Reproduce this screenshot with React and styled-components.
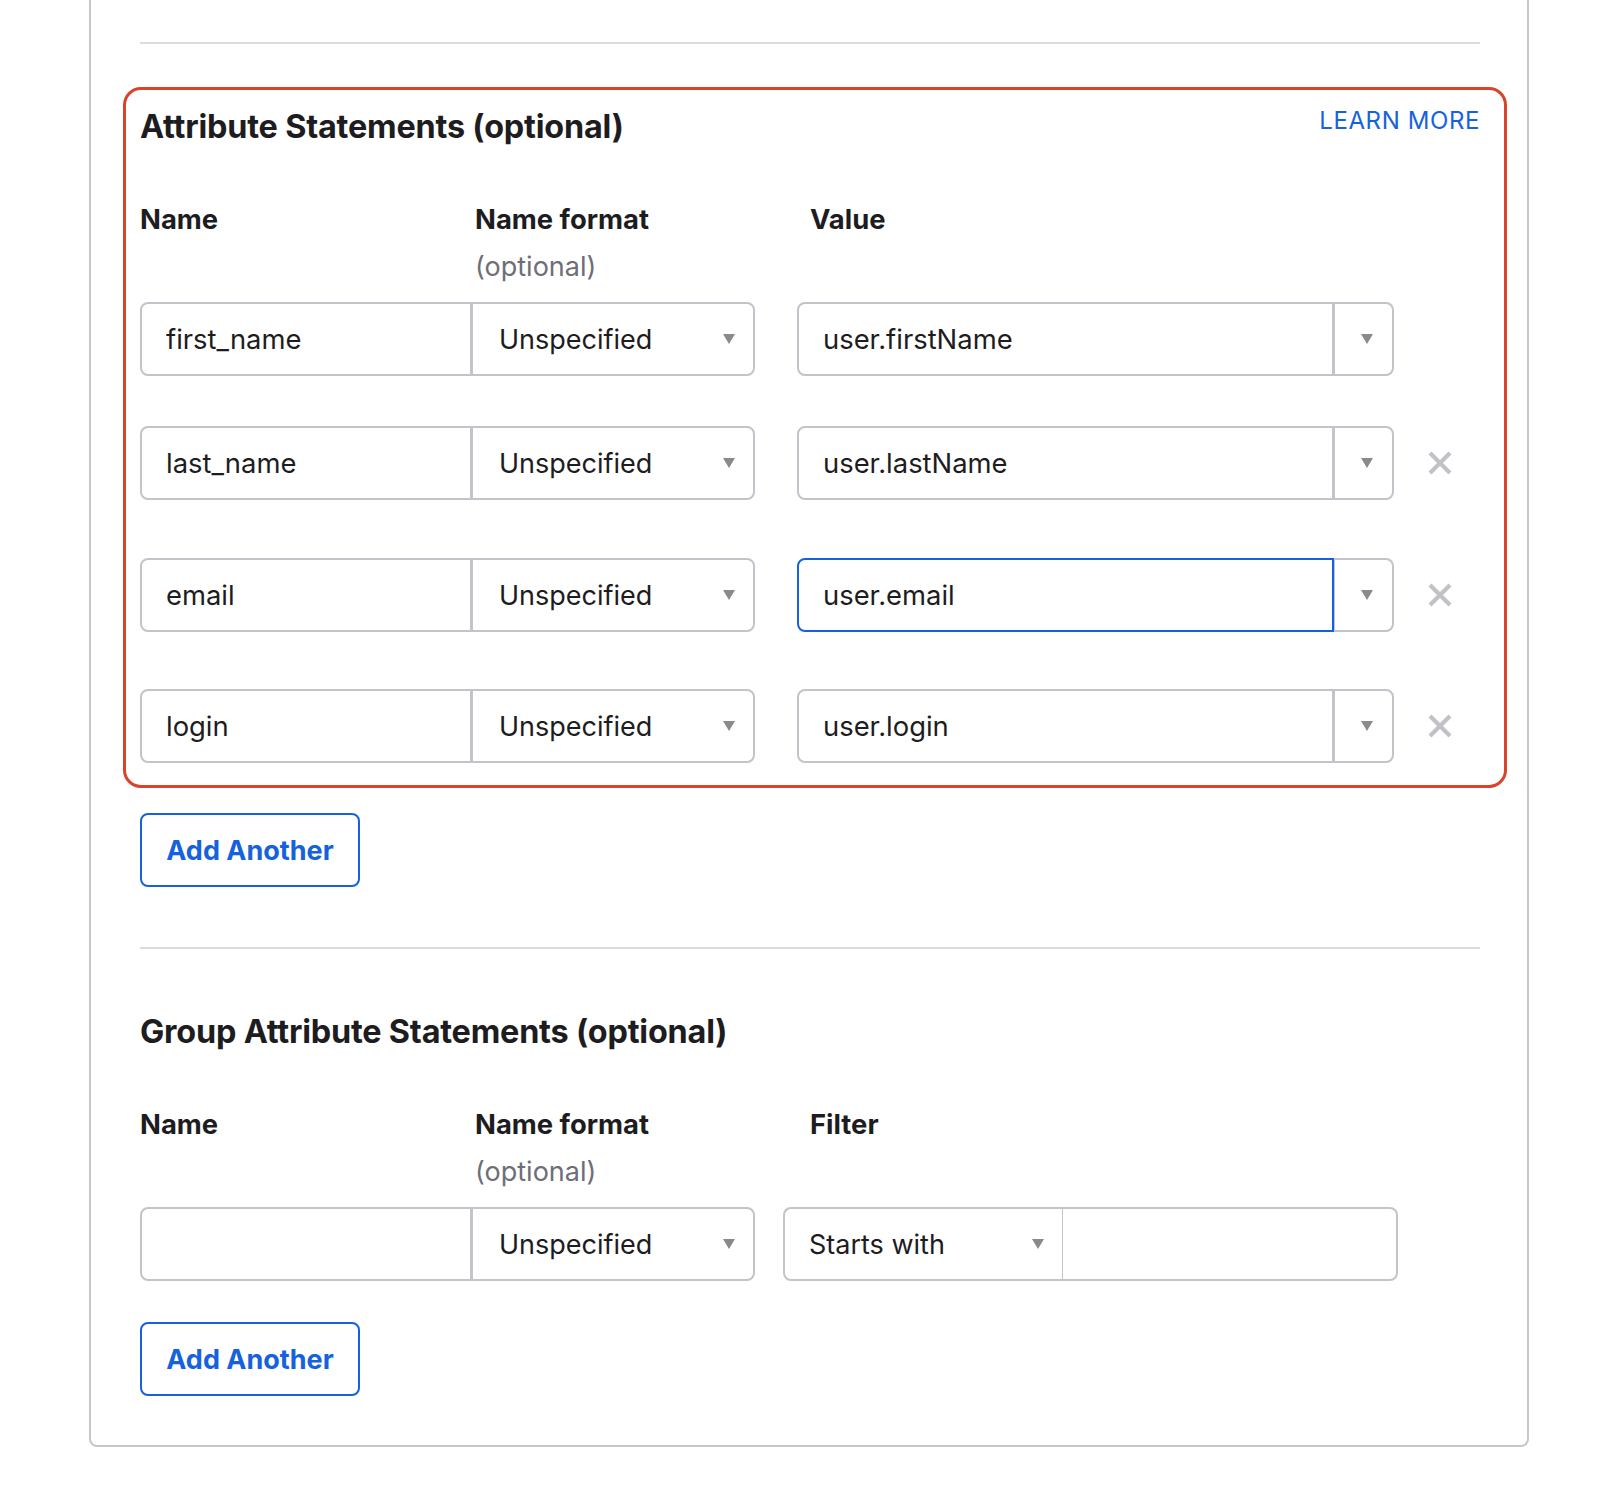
import React from "react";
import styled, { createGlobalStyle } from "styled-components";

const GlobalStyle = createGlobalStyle`
  html, body {
    margin: 0;
    padding: 0;
    background: #ffffff;
  }
  body {
    font-family: Inter, "Noto Sans", "Liberation Sans", sans-serif;
    color: #1d1d21;
  }
`;

const Panel = styled.div`
  box-sizing: border-box;
  width: 1440px;
  margin-left: 89px;
  padding: 42px 47px 49px 49px;
  border: 2px solid #c6c6cd;
  border-top: none;
  border-radius: 0 0 8px 8px;
  min-height: 1447px;
`;

const Divider = styled.hr`
  margin: ${(p) => p.$top || 0}px 0 0;
  border: none;
  height: 2px;
  background: #dcdce0;
`;

const Highlight = styled.section`
  margin: 43px -27px 0 -17px;
  padding: 17px 24px 22px 14px;
  border: 3px solid #d7432b;
  border-radius: 18px;
`;

const SectionHead = styled.div`
  display: flex;
  justify-content: space-between;
  align-items: flex-start;
  margin-top: ${(p) => p.$top || 0}px;
`;

const Title = styled.h2`
  margin: 0;
  font-size: 32.4px;
  line-height: 40px;
  font-weight: 700;
  letter-spacing: -0.2px;
`;

const LearnMore = styled.a`
  margin-top: -2px;
  font-size: 24px;
  line-height: 32px;
  letter-spacing: 0.6px;
  color: #1662dd;
  text-decoration: none;
  cursor: pointer;
`;

const ColumnHeads = styled.div`
  display: grid;
  grid-template-columns: 335px 335px 1fr;
  margin-top: ${(p) => p.$top}px;
  height: 88px;
`;

const Label = styled.div`
  font-size: 27.4px;
  line-height: 44px;
  font-weight: 700;
`;

const Hint = styled.div`
  padding-top: 4px;
  font-size: 27px;
  line-height: 44px;
  font-weight: 400;
  color: #6e6e78;
`;

const Row = styled.div`
  display: flex;
  align-items: center;
  margin-top: ${(p) => p.$top}px;
  height: 74px;
`;

const Group = styled.div`
  display: flex;
  height: 74px;
  width: ${(p) => p.$width}px;
  margin-left: ${(p) => p.$gap || 0}px;
`;

const TextField = styled.input`
  box-sizing: border-box;
  height: 74px;
  width: ${(p) => (p.$width ? `${p.$width}px` : "auto")};
  flex: ${(p) => (p.$width ? "none" : "1")};
  min-width: 0;
  margin: 0;
  padding: 0 0 0 ${(p) => p.$pad || 24}px;
  font-family: inherit;
  font-size: 27.4px;
  color: #1d1d21;
  background: #fff;
  border: 2px solid ${(p) => (p.$focused ? "#1662dd" : "#c3c3ca")};
  border-left-width: ${(p) => (p.$joinLeft ? 1 : 2)}px;
  border-radius: ${(p) => p.$radius};
  outline: none;
`;

const Select = styled.div`
  box-sizing: border-box;
  display: flex;
  align-items: center;
  justify-content: space-between;
  height: 74px;
  width: ${(p) => p.$width}px;
  flex: none;
  padding: 0 18px 0 ${(p) => p.$pad}px;
  font-size: 27px;
  background: #fff;
  border: 2px solid #c3c3ca;
  border-left-width: ${(p) => (p.$joinLeft ? 1 : 2)}px;
  border-right-width: ${(p) => (p.$joinRight ? 0 : 2)}px;
  border-radius: ${(p) => p.$radius};
`;

const CaretButton = styled.div`
  box-sizing: border-box;
  display: flex;
  align-items: center;
  justify-content: center;
  width: 60px;
  height: 74px;
  flex: none;
  padding-left: 6px;
  border: 2px solid #c3c3ca;
  border-left-width: 1px;
  border-radius: 0 8px 8px 0;
`;

const RemoveButton = styled.button`
  display: flex;
  align-items: center;
  justify-content: center;
  margin-left: 32px;
  padding: 2px;
  border: none;
  background: none;
  cursor: pointer;
`;

const AddButton = styled.button`
  box-sizing: border-box;
  display: block;
  width: 220px;
  height: 74px;
  margin-top: ${(p) => p.$top}px;
  padding: 0;
  font-family: inherit;
  font-size: 27px;
  font-weight: 700;
  color: #1662dd;
  background: #fff;
  border: 2px solid #1662dd;
  border-radius: 8px;
  cursor: pointer;
`;

const Caret = () => (
  <svg width="12" height="10" viewBox="0 0 12 10">
    <polygon points="0,0 12,0 6,10" fill="#8a8a8e" />
  </svg>
);

const Cross = () => (
  <svg width="24" height="24" viewBox="0 0 24 24">
    <path d="M2 2 L22 22 M22 2 L2 22" stroke="#c1c1c8" strokeWidth="4.2" />
  </svg>
);

const rows = [
  { name: "first_name", value: "user.firstName", top: 17, removable: false },
  { name: "last_name", value: "user.lastName", top: 50, removable: true },
  { name: "email", value: "user.email", top: 58, removable: true, focused: true },
  { name: "login", value: "user.login", top: 57, removable: true },
];

const NameAndFormat = ({ name }) => (
  <Group $width={615}>
    <TextField $width={332} $radius="8px 0 0 8px" defaultValue={name} readOnly />
    <Select $width={283} $pad={26} $joinLeft $radius="0 8px 8px 0">
      <span>Unspecified</span>
      <Caret />
    </Select>
  </Group>
);

const Heads = ({ third, top }) => (
  <ColumnHeads $top={top}>
    <Label>Name</Label>
    <div>
      <Label>Name format</Label>
      <Hint>(optional)</Hint>
    </div>
    <Label>{third}</Label>
  </ColumnHeads>
);

const App = () => {
  return (
    <>
      <GlobalStyle />
      <Panel>
        <Divider />
        <Highlight>
          <SectionHead>
            <Title>Attribute Statements (optional)</Title>
            <LearnMore>LEARN MORE</LearnMore>
          </SectionHead>
          <Heads third="Value" top={50} />
          {rows.map((r) => (
            <Row key={r.name} $top={r.top}>
              <NameAndFormat name={r.name} />
              <Group $width={597} $gap={42}>
                <TextField
                  $radius="8px 0 0 8px"
                  $focused={r.focused}
                  defaultValue={r.value}
                  readOnly
                />
                <CaretButton>
                  <Caret />
                </CaretButton>
              </Group>
              {r.removable && (
                <RemoveButton aria-label="Remove">
                  <Cross />
                </RemoveButton>
              )}
            </Row>
          ))}
        </Highlight>
        <AddButton $top={25}>Add Another</AddButton>

        <Divider $top={60} />
        <SectionHead $top={63}>
          <Title>Group Attribute Statements (optional)</Title>
        </SectionHead>
        <Heads third="Filter" top={50} />
        <Row $top={17}>
          <NameAndFormat name="" />
          <Group $width={615} $gap={28}>
            <Select $width={279} $pad={24} $joinRight $radius="8px 0 0 8px">
              <span>Starts with</span>
              <Caret />
            </Select>
            <TextField $joinLeft $radius="0 8px 8px 0" defaultValue="" readOnly />
          </Group>
        </Row>
        <AddButton $top={41}>Add Another</AddButton>
      </Panel>
    </>
  );
};

export default App;
